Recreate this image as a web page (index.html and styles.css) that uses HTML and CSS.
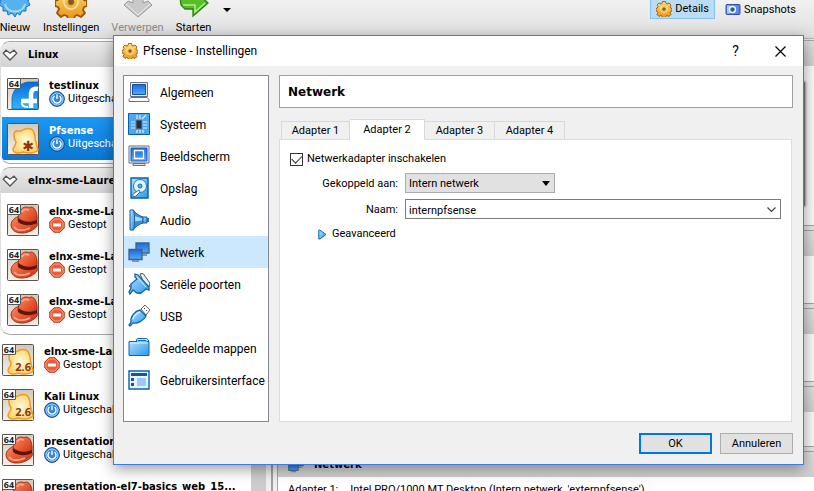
FILE: index.html
```html
<!DOCTYPE html>
<html lang="nl">
<head>
<meta charset="utf-8">
<title>Pfsense - Instellingen</title>
<link rel="stylesheet" href="styles.css">
</head>
<body>
<svg class="defs" aria-hidden="true">
  <defs>
    <linearGradient id="blue" x1="0" y1="0" x2="1" y2="1"><stop offset="0" stop-color="#b5e2ff"/><stop offset="1" stop-color="#2a97ec"/></linearGradient>
    <linearGradient id="screen" x1="0" y1="0" x2="0" y2="1"><stop offset="0" stop-color="#1f66dc"/><stop offset="1" stop-color="#52acff"/></linearGradient>
    <linearGradient id="gold" x1="0" y1="0" x2="0" y2="1"><stop offset="0" stop-color="#ffdc80"/><stop offset="1" stop-color="#ea9616"/></linearGradient>
    <linearGradient id="red" x1="0" y1="0" x2="1" y2="1"><stop offset="0" stop-color="#ff8a60"/><stop offset="1" stop-color="#d02a0c"/></linearGradient>
    <linearGradient id="tile" x1="0" y1="0" x2="0" y2="1"><stop offset="0" stop-color="#d3c9b8"/><stop offset="1" stop-color="#f3efe8"/></linearGradient>
    <radialGradient id="blob"><stop offset="0" stop-color="#fffbe0"/><stop offset="1" stop-color="#ffd676"/></radialGradient>
    <linearGradient id="fedora" x1="0" y1="0" x2="0" y2="1"><stop offset="0" stop-color="#0868d8"/><stop offset="1" stop-color="#35b6ff"/></linearGradient>
  </defs>
  <symbol id="gear" viewBox="0 0 32 32">
    <path fill="url(#gold)" stroke="#965706" stroke-width="1.8" stroke-linejoin="round" d="M13 1h6l1 4 2 1 4-2 4 4-2 4 1 2 3 1v5l-3 1-1 3 2 3-4 4-4-2-2 1-1 3h-6l-1-3-3-1-3 2-4-4 2-4-1-2-3-1v-5l3-1 1-3-2-3 4-4 4 2 2-1z"/>
    <circle cx="16" cy="16" r="7" fill="none" stroke="#ffe9a0" stroke-width="1.5"/>
    <circle cx="16" cy="16" r="3" fill="#7a5a28" stroke="#b87413"/>
  </symbol>
  <symbol id="hat" viewBox="0 0 32 32">
    <rect x=".5" y=".5" width="31" height="31" rx="1" fill="url(#tile)" stroke="#5c544c"/>
    <path fill="url(#red)" stroke="#8e1a06" stroke-width=".8" d="M4 21c0-4 4-8 9-9l17 6c1 3 0 5-3 7-8 6-22 6-23-4z"/>
    <path fill="url(#red)" stroke="#8e1a06" stroke-width=".8" d="M11 17c0-8 3-14 8-14 2 0 3 1 5 0 4 0 7 6 6 15-5 4-14 3-19-1z"/>
    <path fill="#5c160b" d="M11.500 14c4 4 12 5 18.500 2v3c-6 3-14 3-19-1z"/>
    <path fill="none" stroke="#ffa88a" stroke-width="1.600" d="M7 23c3 4 10 4 16 1M15 8c1-3 4-3 7-2"/>
  </symbol>
  <symbol id="blobtile" viewBox="0 0 32 32">
    <rect x=".5" y=".5" width="31" height="31" rx="1" fill="url(#tile)" stroke="#5c544c"/>
    <path fill="url(#blob)" stroke="#ef9a20" stroke-width="1.500" d="M10 8c4 1 5-1 8-2 6-2 9 1 10 7 0 6 2 9 3 14-4 4-11 3-15 2-5 2-10 1-10-3 1-3 3-4 3-7-3-5-3-11 1-11z"/>
  </symbol>
  <symbol id="facet" viewBox="0 0 32 32">
    <rect x=".5" y=".5" width="31" height="31" rx="1" fill="url(#tile)" stroke="#5c544c"/>
    <path fill="url(#fedora)" stroke="#1167b8" stroke-width=".8" d="M5 31V20C6 11 13 5 21 4h10v27z"/>
    <path fill="none" stroke="#fff" stroke-width="4.500" d="M14 23h16M24 30V17c0-5 2-7 7-6"/>
    <path fill="none" stroke="#fff" stroke-width="2" d="M15 23c-1 4 1 6 6 6"/>
  </symbol>
  <symbol id="power" viewBox="0 0 16 16">
    <circle cx="8" cy="8" r="7.400" fill="#3388d6" stroke="#164f93"/>
    <circle cx="8" cy="8" r="6" fill="none" stroke="#a9d8fa"/>
    <path fill="none" stroke="#fff" stroke-width="1.400" d="M8 3.500V8M5.500 5a4 4 0 1 0 5 0"/>
  </symbol>
  <symbol id="stop" viewBox="0 0 16 16">
    <path fill="#e75d3a" stroke="#b22b12" d="M5 .8h6L15.200 5v6L11 15.200H5L.8 11V5z"/>
    <path fill="none" stroke="#ffa989" d="M5.400 2h5.200L14 5.400v5.200L10.600 14H5.400L2 10.600V5.400z"/>
    <path fill="#fff" d="M4 6.500h8v3H4z"/>
  </symbol>
  <symbol id="heart" viewBox="0 0 16 12">
    <path fill="#fff" stroke="#555" stroke-width="1.300" d="M1.200 4.200 4 1.200l4 3 4-3 2.800 3L8 11z"/>
  </symbol>
  <symbol id="net" viewBox="0 0 22 22">
    <path fill="url(#screen)" stroke="#3d6484" stroke-width="1.300" d="M8 2h13v10H8z"/><path fill="#7d97aa" d="M12 13h7v2h-7z"/>
    <path fill="url(#screen)" stroke="#3d6484" stroke-width="1.300" d="M1 8.500h13v10H1z"/><path fill="#7d97aa" d="M4 19h7v2H4z"/>
  </symbol>
</svg>

<div class="app">
  <header class="toolbar">
    <div class="actions">
      <button class="tool"><svg width="32" height="18" viewBox="0 14 32 18"><path fill="#55b1f1" stroke="#1771bd" d="M2 6h28l1 6-2 3 2 4-4 2 0 4-4 0-2 4-3-2-2 4-3-4-4 2-1-4-4 0 0-4-4-2 2-4-2-3z"/><path fill="none" stroke="#a5daff" stroke-width="2" d="M6 18c2 10 18 10 20 0"/></svg><span>Nieuw</span></button>
      <button class="tool"><svg width="32" height="18" viewBox="0 14 32 18"><use href="#gear" width="32" height="32"/></svg><span>Instellingen</span></button>
      <button class="tool off" disabled><svg width="32" height="18" viewBox="0 14 32 18"><path fill="#c9c9c9" stroke="#999" d="M11 2h10v15l5-2 4 4-14 12L2 19l4-4 5 2z"/><path fill="none" stroke="#eee" d="m4 18 12 11 12-11"/></svg><span>Verwerpen</span></button>
      <button class="tool"><svg width="32" height="18" viewBox="0 14 32 18"><path fill="#58bd2c" stroke="#2d8012" stroke-width="1.300" d="M2 11h14V4l14 13-15 13v-7H7l-4-4z"/><path fill="none" stroke="#b2f080" stroke-width="1.500" d="M5 19h12v7l10-9"/></svg><span>Starten</span></button>
      <button class="more" aria-label="Starten"><svg width="8" height="4"><path d="M0 0h8L4 4z"/></svg></button>
    </div>
    <div class="views">
      <button class="view on"><svg width="16" height="16"><use href="#gear"/></svg>Details</button>
      <button class="view"><svg width="16" height="16" viewBox="0 0 16 16"><rect x="1" y="2.500" width="14" height="10" rx="1" fill="#5f83e8" stroke="#3151ad"/><path fill="#aac5ff" d="M2 3.500h3v8H2z"/><circle cx="7.500" cy="7.500" r="3" fill="#285bb8" stroke="#fff" stroke-width="1.400"/></svg>Snapshots</button>
    </div>
  </header>

  <main class="main">
    <aside class="machines">
      <div class="list">
        <section class="group">
          <h2 class="group-head"><svg width="16" height="12"><use href="#heart"/></svg>Linux</h2>
          <div class="vm"><span class="os"><svg><use href="#facet"/></svg><i>64</i></span><div><b>testlinux</b><p><svg><use href="#power"/></svg>Uitgeschakeld</p></div></div>
          <div class="vm chosen"><span class="os"><svg><use href="#blobtile"/></svg><em class="star">✱</em></span><div><b>Pfsense</b><p><svg><use href="#power"/></svg>Uitgeschakeld</p></div></div>
        </section>
        <section class="group">
          <h2 class="group-head"><svg width="16" height="12"><use href="#heart"/></svg>elnx-sme-Laurens</h2>
          <div class="vm"><span class="os"><svg><use href="#hat"/></svg><i>64</i></span><div><b>elnx-sme-Laurens</b><p><svg><use href="#stop"/></svg>Gestopt</p></div></div>
          <div class="vm"><span class="os"><svg><use href="#hat"/></svg><i>64</i></span><div><b>elnx-sme-Laurens</b><p><svg><use href="#stop"/></svg>Gestopt</p></div></div>
          <div class="vm"><span class="os"><svg><use href="#hat"/></svg><i>64</i></span><div><b>elnx-sme-Laurens</b><p><svg><use href="#stop"/></svg>Gestopt</p></div></div>
        </section>
        <div class="loose">
          <div class="vm"><span class="os"><svg><use href="#blobtile"/></svg><i>64</i><em>2.6</em></span><div><b>elnx-sme-Laurens</b><p><svg><use href="#stop"/></svg>Gestopt</p></div></div>
          <div class="vm"><span class="os"><svg><use href="#blobtile"/></svg><i>64</i><em>2.6</em></span><div><b>Kali Linux</b><p><svg><use href="#power"/></svg>Uitgeschakeld</p></div></div>
          <div class="vm"><span class="os"><svg><use href="#hat"/></svg><i>64</i></span><div><b>presentation</b><p><svg><use href="#power"/></svg>Uitgeschakeld</p></div></div>
          <div class="vm"><span class="os"><svg><use href="#hat"/></svg><i>64</i></span><div><b>presentation-el7-basics_web_15...</b></div></div>
        </div>
      </div>
      <div class="scroll"></div>
    </aside>
    <div class="details">
      <section class="card tall"><div class="card-head"></div><div class="preview"></div></section>
      <section class="card"><div class="card-head"></div></section>
      <section class="card"><div class="card-head"></div></section>
      <section class="card short"><div class="card-head"></div></section>
      <section class="card last">
        <h2 class="card-head"><svg width="16" height="16"><use href="#net"/></svg>Netwerk</h2>
        <p class="fact"><span>Adapter 1:</span><span>Intel PRO/1000 MT Desktop (Intern netwerk, 'externpfsense')</span></p>
      </section>
    </div>
  </main>
</div>

<div class="dialog" role="dialog" aria-labelledby="title">
  <div class="titlebar">
    <svg width="16" height="16"><use href="#gear"/></svg>
    <h1 id="title">Pfsense - Instellingen</h1>
    <button class="cap" aria-label="Help">?</button>
    <button class="cap" aria-label="Sluiten"><svg width="11" height="11"><path fill="none" stroke="#000" stroke-width="1.200" d="m.5.5 10 10m0-10-10 10"/></svg></button>
  </div>
  <div class="content">
    <nav class="nav">
      <a href="#"><svg viewBox="0 0 22 22"><path fill="#e9edf0" stroke="#66717b" d="M2.500 1.500h17v14h-17z"/><path fill="url(#screen)" stroke="#1550a8" d="M4.500 3.500h13v10h-13z"/><path fill="#fafafa" stroke="#66717b" d="M3 16.500h16l2 2v2H1v-2z"/></svg><span>Algemeen</span></a>
      <a href="#"><svg viewBox="0 0 22 22"><path fill="#4ba8f0" stroke="#075fae" d="M.5.5h21v21H.5z"/><path stroke="#d8f0ff" stroke-width="1.200" d="M3 9h4M3 12h4M3 15h4M15 9h4M15 12h4M15 15h4M9 2v4M12 2v4M9 17v3M12 17v3M15 17v3M14 6l4-4"/><path fill="#222f40" stroke="#555" d="M8.500 7.500h5v8h-5z"/></svg><span>Systeem</span></a>
      <a href="#"><svg viewBox="0 0 22 22"><path fill="#f4f4f4" stroke="#66717b" d="M1 1h20v17H1z"/><path fill="url(#screen)" stroke="#1a5fc0" d="M3 3h16v13H3z"/><path fill="none" stroke="#fff" stroke-width="1.300" d="M6.500 5.500h9v8h-9z"/><path fill="#ddd" stroke="#66717b" d="M5 18.500h12v2H5z"/></svg><span>Beeldscherm</span></a>
      <a href="#"><svg viewBox="0 0 22 22"><path fill="url(#blue)" stroke="#075fae" stroke-width="1.400" d="M3 1h17v20H3z"/><circle cx="12" cy="9" r="6.500" fill="#dff4ff" stroke="#287bb8"/><circle cx="12" cy="9" r="2" fill="#65a9d8" stroke="#176bac"/><path fill="#fff" stroke="#37729b" d="m5 17 6-4 1 2-4 4-3 1z"/></svg><span>Opslag</span></a>
      <a href="#"><svg viewBox="0 0 22 22"><path fill="url(#blue)" stroke="#1d5f9e" d="M13 8h6v6h-6z"/><path fill="#1b6fc4" d="M19 9h2v4h-2z"/><path fill="#3a8fdc" stroke="#1d5f9e" d="M5 .8c2 3 6 6.200 10 7.200v6c-4 1-8 4-10 7.200z"/><path fill="#a8dcff" d="M6.500 7 14 9.500v2l-7.500 1z"/><path fill="url(#blue)" stroke="#1d5f9e" d="M2 1h3.500c1.500 5 1.500 15 0 20H2z"/></svg><span>Audio</span></a>
      <a href="#" class="current" aria-current="page"><svg><use href="#net"/></svg><span>Netwerk</span></a>
      <a href="#"><svg viewBox="0 0 22 22"><path fill="#eee" stroke="#555" d="m12 1 3-.5 7 9.500-1 4-3 1zM1 13l3-2 10 8-2 2z"/><path fill="url(#blue)" stroke="#0b65ae" stroke-width="1.300" d="m7 1 3 1 11 12v3l-3-1-5 4H9l-4-3-3 4-1-2 2-4v-4l6-5-2-2z"/><path fill="none" stroke="#d5f2ff" d="m9 4 9 10"/></svg><span>Seriële poorten</span></a>
      <a href="#"><svg viewBox="0 0 22 22"><path fill="#fff" stroke="#666" d="m13 4 4-4 5 5-4 5z"/><path fill="#444" d="M16 3h1v1h-1zM18 5h1v1h-1z"/><path fill="url(#blue)" stroke="#0e69b1" stroke-width="1.300" d="m12 5 6 6c-2 4-8 8-13 7l-3 3-1-1 2-3C2 12 7 6 12 5z"/><path fill="none" stroke="#d2f1ff" stroke-width="1.500" d="M5 14c1-4 4-6 7-7"/></svg><span>USB</span></a>
      <a href="#"><svg viewBox="0 0 22 22"><path fill="#c7eaff" stroke="#0b68ae" d="M8.500 5V3l1-1.500h9l2 1.500v3z"/><path fill="url(#blue)" stroke="#0b68ae" d="M1 4.500h8l1-1h8l1 1h2v14H1z"/><path fill="none" stroke="#daf3ff" d="M2 6h18"/></svg><span>Gedeelde mappen</span></a>
      <a href="#"><svg viewBox="0 0 22 22"><path fill="#e8f5ff" stroke="#0862ae" stroke-width="1.400" d="M1 2h20v18H1z"/><path fill="#1554a0" d="M3 4h16v3H3zM3 9h3v3H3zM3 14h3v3H3z"/><path fill="#9ac8ff" d="M9 9h9v8H9z"/></svg><span>Gebruikersinterface</span></a>
    </nav>
    <div class="page">
      <h2 class="page-title">Netwerk</h2>
      <div class="tabs" role="tablist">
        <button role="tab">Adapter 1</button><button role="tab" aria-selected="true">Adapter 2</button><button role="tab">Adapter 3</button><button role="tab">Adapter 4</button>
      </div>
      <form class="panel" role="tabpanel">
        <div class="check"><input type="checkbox" id="enable" checked><label for="enable">Netwerkadapter inschakelen</label></div>
        <div class="fields">
          <label for="attach">Gekoppeld aan:</label>
          <div class="pick"><select id="attach"><option>Intern netwerk</option></select><svg width="8" height="5"><path d="M0 0h8L4 5z"/></svg></div>
          <label for="name">Naam:</label>
          <div class="combo"><input type="text" id="name" value="internpfsense"><svg width="9" height="6"><path fill="none" stroke="#444" stroke-width="1.200" d="m.5.500 4 4 4-4"/></svg></div>
        </div>
        <button type="button" class="advanced"><svg width="9" height="11" viewBox="0 0 9 11"><path fill="url(#blue)" stroke="#0b68ae" d="M.8 1v9h1L8 5.500 1.800 1z"/></svg>Geavanceerd</button>
      </form>
    </div>
  </div>
  <div class="buttons"><button class="push primary">OK</button><button class="push">Annuleren</button></div>
</div>
</body>
</html>
```
FILE: styles.css
```css
* { box-sizing: border-box; }

body {
  margin: 0;
  height: 100vh;
  overflow: hidden;
  position: relative;
  font: 11px/14px Roboto, sans-serif;
  color: #000;
  background: #f0f0f0;
}

h1, h2, p { margin: 0; font-size: inherit; }
button, input, select { font: inherit; color: inherit; }
button { padding: 0; border: 0; background: none; }
svg { display: block; flex: none; }
.defs { position: absolute; width: 0; height: 0; }

.app { display: flex; flex-direction: column; height: 100%; }

/* Toolbar */
.toolbar {
  flex: none;
  display: flex;
  justify-content: space-between;
  height: 39px;
  padding-right: 13px;
  background: linear-gradient(#f1f1f1, #dfdfdf);
  border-bottom: 1px solid #b5b5b5;
  overflow: hidden;
}
.actions { display: flex; align-items: flex-start; gap: 12px; margin-left: -1px; }
.tool { display: flex; flex-direction: column; align-items: center; gap: 3px; }
.off { color: #8c8c8c; }
.more { padding-top: 8px; }
.views { display: flex; align-items: flex-start; gap: 5px; }
.view { display: flex; align-items: center; gap: 3px; height: 19px; padding: 0 5px; }
.view.on { background: #bcdcf4; border: 1px solid #84c3f2; border-top: 0; }

/* Machine list */
.main { flex: 1; min-height: 0; display: grid; grid-template-columns: 273px 1fr; gap: 4px; }
.machines { display: flex; min-width: 0; padding-right: 5px; border-right: 2px solid #a0a0a0; overflow: hidden; }
.list { flex: 1; min-width: 0; background: #fff; padding-top: 2px; }
.scroll { flex: none; width: 15px; background: #cdcdcd; }
.group {
  margin-bottom: 3px;
  padding-bottom: 2px;
  border: 1px solid #a8a8a8;
  border-right: 0;
  border-left-color: #ddd;
  border-radius: 10px 0 0 10px;
  overflow: hidden;
}
.group-head {
  display: flex;
  align-items: center;
  gap: 10px;
  height: 25px;
  margin-bottom: 4px;
  padding-left: 1px;
  background: linear-gradient(#ebebeb, #d3d3d3);
}
.group-head, .vm b, .card-head { font: bold 10px/13px "DejaVu Sans", sans-serif; }
.vm { display: flex; align-items: center; gap: 10px; height: 45px; padding-left: 6px; white-space: nowrap; }
.loose { margin-top: -1px; }
.loose .vm { padding-left: 2px; }
.vm > div { height: 30px; }
.vm p { display: flex; align-items: center; gap: 3px; height: 14px; }
.vm p svg { width: 16px; height: 16px; }
.vm b { display: block; }
.chosen { color: #fff; background: linear-gradient(#1b98f5, #0a77d2) 1px 1px / 100% 43px no-repeat; }
.os { position: relative; flex: none; width: 32px; height: 32px; }
.os svg { width: 32px; height: 32px; }
.os i {
  position: absolute;
  left: 0;
  top: 0;
  width: 14px;
  height: 11px;
  border: 1px solid #555;
  border-radius: 1px;
  background: #fff;
  color: #222;
  font: bold 9px/9px "Noto Sans", sans-serif;
  text-align: center;
}
.os em {
  position: absolute;
  right: 3px;
  bottom: 2px;
  font: bold 11px/14px "Noto Sans", sans-serif;
  color: #8a3a08;
}
.os .star { right: 5px; font-size: 14px; font-family: "DejaVu Sans", sans-serif; }

/* Details */
.details { min-width: 0; padding-top: 1px; overflow: hidden; background: #e6e6e6; }
.card { height: 74px; margin-bottom: 4px; background: #fafafa; border: 1px solid #a5a5a5; border-right: 0; overflow: hidden; }
.card.tall { height: 186px; }
.card.short { height: 61px; }
.card.last { background: #fff; }
.card-head { display: flex; align-items: center; gap: 10px; height: 25px; padding-left: 10px; background: linear-gradient(#e0e0e0, #cfcfcf); }
.preview { height: 124px; margin: 16px 9px 0 50%; background: #777; box-shadow: 0 0 3px #555; }
.fact { display: flex; gap: 12px; padding: 6px 10px; white-space: nowrap; }

/* Settings dialog */
.dialog {
  position: absolute;
  inset: 35px 10px 26px 113px;
  display: flex;
  flex-direction: column;
  background: #f0f0f0;
  border: 1px solid #3c7be8;
  box-shadow: 0 4px 14px rgba(0, 0, 0, 0.4);
}
.titlebar { flex: none; display: flex; align-items: center; height: 30px; padding-left: 8px; background: #fff; }
.titlebar h1 { flex: 1; margin-left: 5px; font-size: 12px; font-weight: normal; }
.cap { display: grid; place-items: center; width: 45px; height: 30px; font-size: 14px; }
.content { flex: 1; min-height: 0; display: flex; gap: 10px; padding: 9px 10px 0 9px; }
.nav { flex: none; width: 146px; background: #fff; border: 1px solid #828790; }
.nav a {
  display: flex;
  align-items: center;
  gap: 10px;
  height: 32px;
  padding-left: 4px;
  color: inherit;
  font-size: 12px;
  line-height: 16px;
  text-decoration: none;
  white-space: nowrap;
}
.nav svg { width: 22px; height: 22px; }
.nav span { padding-top: 2px; }
.nav .current { background: #cce8ff; }
.page { flex: 1; min-width: 0; display: flex; flex-direction: column; }
.page-title {
  height: 33px;
  padding-left: 8px;
  background: #fff;
  border: 1px solid #a0a0a0;
  font: bold 12px/32px "DejaVu Sans", sans-serif;
}
.tabs { display: flex; align-items: flex-end; height: 21px; margin: 11px 0 -1px 2px; }
.tabs button { width: 70px; height: 19px; border: 1px solid #d9d9d9; border-left: 0; }
.tabs button:first-child { width: 69px; border-left: 1px solid #d9d9d9; }
.tabs [aria-selected] { width: 75px; height: 21px; background: #fff; border-bottom-color: #fff; z-index: 1; }
.panel { flex: 1; margin-right: 1px; padding: 12px 10px; background: #fff; border: 1px solid #dcdcdc; }
.check { display: flex; align-items: center; gap: 4px; height: 14px; }
.check input {
  appearance: none;
  width: 13px;
  height: 13px;
  margin: 0;
  border: 1px solid #333;
  display: grid;
  place-items: center;
}
.check input:checked::before {
  content: "";
  width: 9px;
  height: 5px;
  margin-bottom: 3px;
  border: solid #333;
  border-width: 0 0 1px 1px;
  transform: rotate(-45deg);
}
.fields { display: grid; grid-template-columns: 108px 1fr; gap: 6px 7px; margin-top: 7px; align-items: center; }
.fields label { padding-top: 2px; text-align: right; }
.pick, .combo { position: relative; height: 20px; }
.pick { width: 150px; }
.pick select, .combo input { appearance: none; width: 100%; height: 20px; padding: 2px 3px 0; border: 1px solid #adadad; border-radius: 0; background: #e1e1e1; display: block; }
.combo input { background: #fff; border-color: #7a7a7a; }
.pick svg, .combo svg { position: absolute; right: 5px; top: 8px; pointer-events: none; }
.advanced { display: flex; align-items: center; gap: 5px; margin: 8px 0 0 28px; }
.buttons { flex: none; display: flex; justify-content: flex-end; gap: 8px; padding: 11px 10px 10px; }
.push { width: 73px; height: 21px; background: #e1e1e1; border: 1px solid #adadad; }
.primary { border: 2px solid #0078d7; }
```
